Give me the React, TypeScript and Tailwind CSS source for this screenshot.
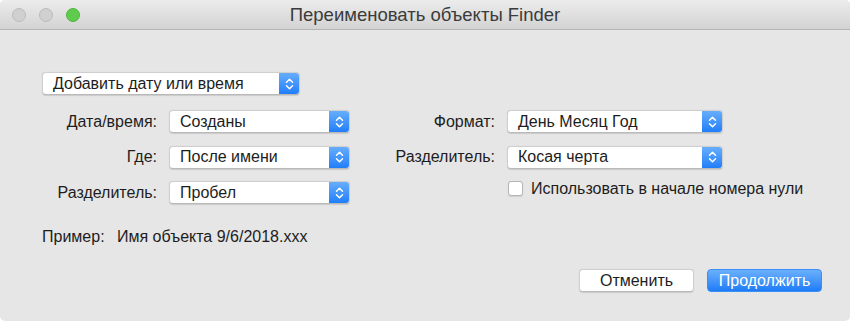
import React from "react";

const font = { fontFamily: '"Liberation Sans", "Noto Sans", Arial, sans-serif' };

function Chevrons() {
  return (
    <svg width="9" height="14" viewBox="0 0 9 14" fill="none">
      <path d="M1.5 5.2 L4.5 2.2 L7.5 5.2" stroke="white" strokeWidth="1.5" strokeLinecap="round" strokeLinejoin="round" />
      <path d="M1.5 8.8 L4.5 11.8 L7.5 8.8" stroke="white" strokeWidth="1.5" strokeLinecap="round" strokeLinejoin="round" />
    </svg>
  );
}

function Popup({ text, w }: { text: string; w: string }) {
  return (
    <div
      className={`${w} h-[23px] flex rounded-[4px] bg-white border border-[#cfcfcf] border-b-[#b9b9b9] shadow-[0_0.5px_1px_rgba(0,0,0,0.12)] overflow-hidden`}
    >
      <div className="flex-1 flex items-center pl-[10px] text-[16px] text-[#1d1d1d] whitespace-nowrap">{text}</div>
      <div className="w-[20px] h-full flex items-center justify-center bg-gradient-to-b from-[#66adfb] to-[#1e7ef9]">
        <Chevrons />
      </div>
    </div>
  );
}

function Label({ text }: { text: string }) {
  return <div className="h-[23px] flex items-center justify-end text-[16px] text-[#1d1d1d] whitespace-nowrap">{text}</div>;
}

export default function App() {
  return (
    <div className="w-[850px] h-[321px] bg-white" style={font}>
      <div className="w-[850px] h-[321px] rounded-[5px] overflow-hidden bg-[#e6e6e6] flex flex-col">
        <div className="h-[30px] shrink-0 relative flex items-center justify-center bg-gradient-to-b from-[#ececec] to-[#d3d3d3] border-b border-[#b4b4b4]">
          <div className="absolute left-[12px] top-[8px] flex gap-[13px]">
            <div className="w-[14px] h-[14px] rounded-full bg-[#d0d0d0] border border-[#bcbcbc]" />
            <div className="w-[14px] h-[14px] rounded-full bg-[#d0d0d0] border border-[#bcbcbc]" />
            <div className="w-[14px] h-[14px] rounded-full bg-[#5fcb4c] border border-[#4cb73b]" />
          </div>
          <div className="text-[18.5px] text-[#3b3b3b] pt-[1px]">Переименовать объекты Finder</div>
        </div>
        <div className="flex-1 flex flex-col pl-[42px] pt-[42px]">
          <Popup text="Добавить дату или время" w="w-[258px]" />
          <div className="grid grid-cols-[115px_181px_133px_216px] gap-x-[12px] gap-y-[12.5px] mt-[15px]">
            <Label text="Дата/время:" />
            <Popup text="Созданы" w="w-[181px]" />
            <Label text="Формат:" />
            <Popup text="День Месяц Год" w="w-[216px]" />
            <Label text="Где:" />
            <Popup text="После имени" w="w-[181px]" />
            <Label text="Разделитель:" />
            <Popup text="Косая черта" w="w-[216px]" />
            <Label text="Разделитель:" />
            <Popup text="Пробел" w="w-[181px]" />
            <div />
            <div className="h-[23px] flex items-start pl-[1px] gap-[8px] whitespace-nowrap">
              <div className="w-[15px] h-[15px] shrink-0 rounded-[3px] bg-white border border-[#b5b5b5] shadow-[0_0.5px_1px_rgba(0,0,0,0.1)]" />
              <div className="text-[16px] leading-[16px] text-[#1d1d1d]">Использовать в начале номера нули</div>
            </div>
          </div>
          <div className="mt-[23px] flex text-[16px] text-[#1d1d1d] h-[19px] items-center">
            <span className="w-[75px]">Пример:</span>
            <span>Имя объекта 9/6/2018.xxx</span>
          </div>
          <div className="mt-[23px] flex justify-end pr-[28px] gap-[13px]">
            <div className="w-[115px] h-[23px] rounded-[4px] bg-white border border-[#cfcfcf] border-b-[#b9b9b9] shadow-[0_0.5px_1px_rgba(0,0,0,0.12)] flex items-center justify-center text-[16px] text-[#1d1d1d]">
              Отменить
            </div>
            <div className="w-[115px] h-[23px] rounded-[4px] bg-gradient-to-b from-[#6ab0fb] to-[#1b7cf7] border border-[#3b8ef5] flex items-center justify-center text-[16px] text-white">
              Продолжить
            </div>
          </div>
        </div>
      </div>
    </div>
  );
}
